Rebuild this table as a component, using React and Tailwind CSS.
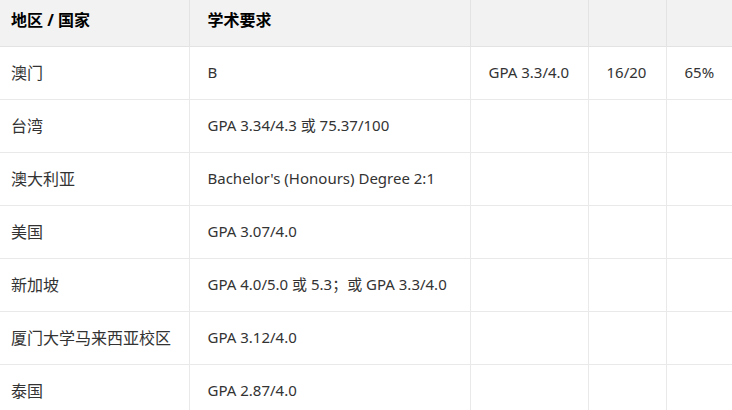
const rows = [
  ["澳门", "B", "GPA 3.3/4.0", "16/20", "65%"],
  ["台湾", "GPA 3.34/4.3 或 75.37/100", "", "", ""],
  ["澳大利亚", "Bachelor's (Honours) Degree 2:1", "", "", ""],
  ["美国", "GPA 3.07/4.0", "", "", ""],
  ["新加坡", "GPA 4.0/5.0 或 5.3；或 GPA 3.3/4.0", "", "", ""],
  ["厦门大学马来西亚校区", "GPA 3.12/4.0", "", "", ""],
  ["泰国", "GPA 2.87/4.0", "", "", ""],
];

export default function App() {
  return (
    <div
      className="w-[732px] h-[410px] overflow-hidden bg-white text-[#333] text-[15px]"
      style={{ fontFamily: '"Noto Sans", "Noto Sans CJK SC", sans-serif' }}
    >
      <table className="border-collapse table-fixed w-[786px]">
        <thead>
          <tr className="bg-[#f2f2f2] h-[46px]">
            <th className="w-[189px] border-r border-b border-[#e3e3e3] pl-[11px] pb-[6px] text-left text-[16px] font-bold text-black">
              地区 / 国家
            </th>
            <th className="w-[281px] border-r border-b border-[#e3e3e3] pl-[18px] pb-[6px] text-left text-[16px] font-bold text-black">
              学术要求
            </th>
            <th className="w-[118px] border-r border-b border-[#e3e3e3]"></th>
            <th className="w-[78px] border-r border-b border-[#e3e3e3]"></th>
            <th className="w-[120px] border-b border-[#e3e3e3]"></th>
          </tr>
        </thead>
        <tbody>
          {rows.map((r, i) => (
            <tr key={i} className="h-[53px]">
              <td className="border-r border-b border-[#e9e9e9] pl-[11px] text-[16px] whitespace-nowrap">{r[0]}</td>
              <td className="border-r border-b border-[#e9e9e9] pl-[18px] whitespace-nowrap">{r[1]}</td>
              <td className="border-r border-b border-[#e9e9e9] pl-[18px] whitespace-nowrap">{r[2]}</td>
              <td className="border-r border-b border-[#e9e9e9] pl-[18px] whitespace-nowrap">{r[3]}</td>
              <td className="border-b border-[#e9e9e9] pl-[18px] whitespace-nowrap">{r[4]}</td>
            </tr>
          ))}
        </tbody>
      </table>
    </div>
  );
}
